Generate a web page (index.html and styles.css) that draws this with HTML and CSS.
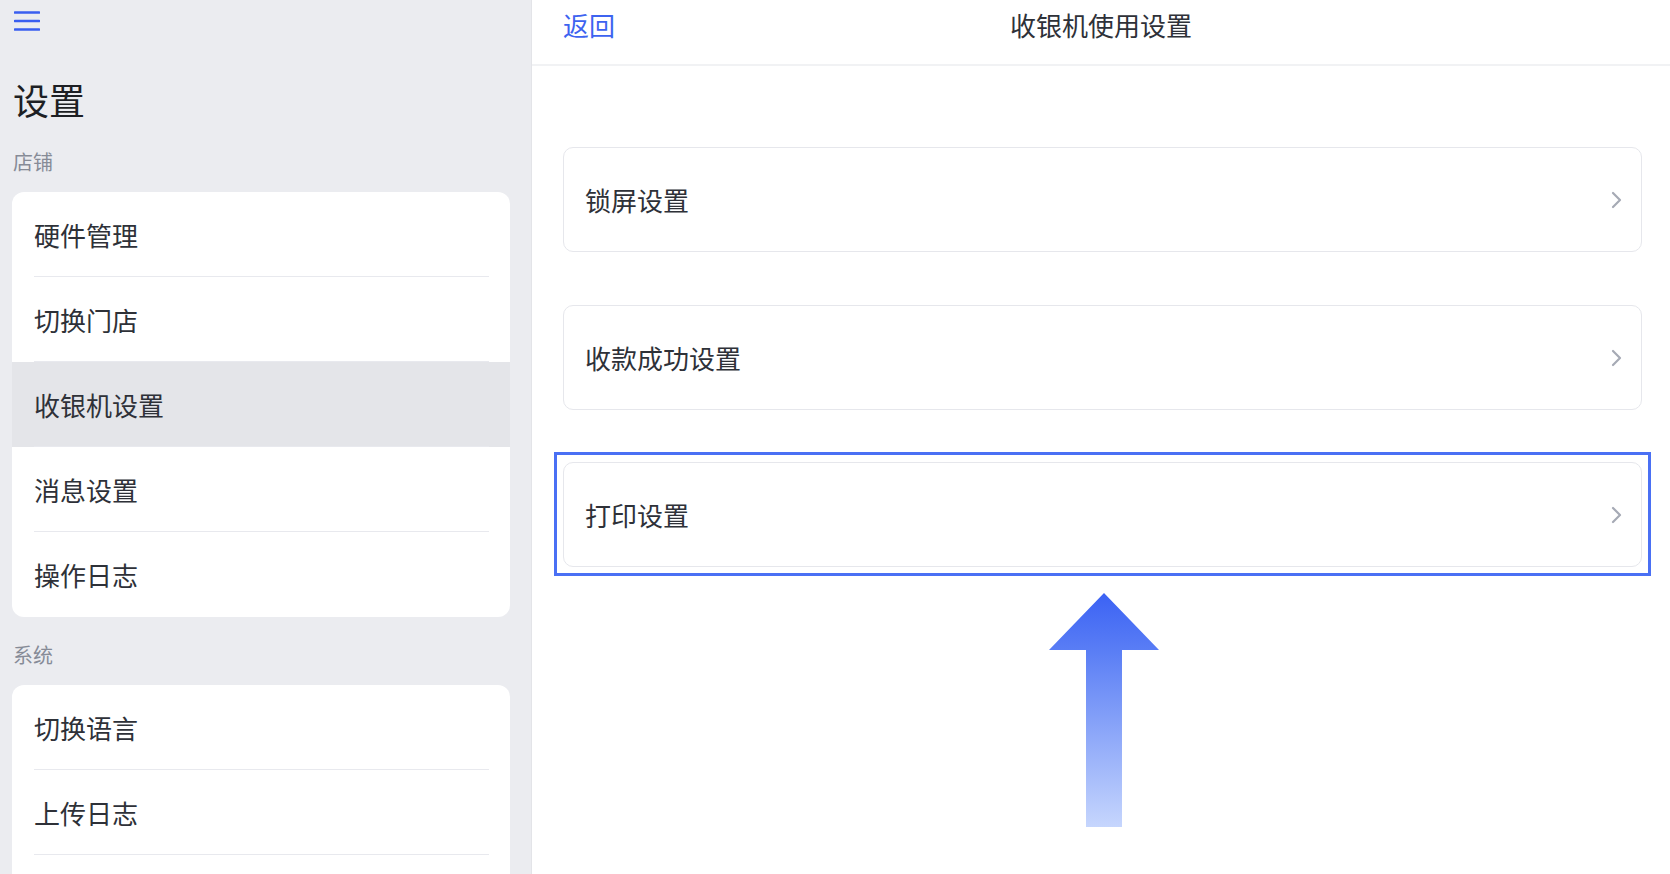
FILE: index.html
```html
<!DOCTYPE html>
<html lang="zh-CN">
<head>
<meta charset="utf-8">
<title>收银机使用设置</title>
<link rel="stylesheet" href="styles.css">
</head>
<body>
<div class="app">
  <aside class="sidebar">
    <div class="topbar">
      <svg class="menu-icon" width="26" height="22" viewBox="0 0 26 22">
        <path d="M1 2.5h24M1 11h24M1 19.5h24" stroke="#3a5ef0" stroke-width="2.6" stroke-linecap="round" fill="none"/>
      </svg>
    </div>
    <h1 class="side-title">设置</h1>
    <div class="section-label">店铺</div>
    <div class="group">
      <div class="row">硬件管理</div>
      <div class="row">切换门店</div>
      <div class="row selected">收银机设置</div>
      <div class="row">消息设置</div>
      <div class="row last">操作日志</div>
    </div>
    <div class="section-label sys">系统</div>
    <div class="group">
      <div class="row">切换语言</div>
      <div class="row">上传日志</div>
      <div class="row"></div>
    </div>
  </aside>
  <main class="panel">
    <header class="panel-header">
      <span class="back">返回</span>
      <span class="panel-title">收银机使用设置</span>
      <span class="spacer"></span>
    </header>
    <div class="panel-body">
      <div class="item">
        <span>锁屏设置</span>
        <svg class="chev" width="11" height="20" viewBox="0 0 11 20"><path d="M2 3l7 7-7 7" stroke="#a6aab5" stroke-width="2.2" fill="none" stroke-linecap="round" stroke-linejoin="round"/></svg>
      </div>
      <div class="item">
        <span>收款成功设置</span>
        <svg class="chev" width="11" height="20" viewBox="0 0 11 20"><path d="M2 3l7 7-7 7" stroke="#a6aab5" stroke-width="2.2" fill="none" stroke-linecap="round" stroke-linejoin="round"/></svg>
      </div>
      <div class="highlight">
        <div class="item">
          <span>打印设置</span>
          <svg class="chev" width="11" height="20" viewBox="0 0 11 20"><path d="M2 3l7 7-7 7" stroke="#a6aab5" stroke-width="2.2" fill="none" stroke-linecap="round" stroke-linejoin="round"/></svg>
        </div>
      </div>
      <div class="arrow-wrap">
        <svg width="110" height="234" viewBox="0 0 110 234">
          <defs>
            <linearGradient id="ag" x1="0" y1="0" x2="0" y2="1">
              <stop offset="0" stop-color="#3b62f4"/>
              <stop offset="0.25" stop-color="#5a7ef5"/>
              <stop offset="1" stop-color="#c6d6fd"/>
            </linearGradient>
          </defs>
          <path d="M55 0L110 57H73V234H37V57H0Z" fill="url(#ag)"/>
        </svg>
      </div>
    </div>
  </main>
</div>
</body>
</html>
```
FILE: styles.css
```css
* { box-sizing: border-box; }
html, body {
  margin: 0;
  padding: 0;
  height: 100%;
  overflow: hidden;
}
body {
  font-family: "Noto Sans CJK SC", "Noto Sans", sans-serif;
  color: #2e3138;
  background: #ffffff;
}
.app {
  display: flex;
  height: 874px;
}
.sidebar {
  width: 532px;
  flex: none;
  background: #ebecf0;
  padding: 0 21px 0 12px;
  border-right: 1px solid #e3e4e8;
}
.topbar {
  height: 44px;
  padding: 10px 0 0 2px;
}
.menu-icon { display: block; }
.side-title {
  margin: 30px 0 0 1px;
  font-size: 36px;
  font-weight: 400;
  line-height: 50px;
  color: #1d1f24;
}
.section-label {
  margin-top: 24px;
  font-size: 20px;
  line-height: 28px;
  color: #868b97;
  padding-left: 1px;
}
.section-label.sys {
  margin-top: 24px;
}
.group {
  margin-top: 16px;
  background: #ffffff;
  border-radius: 12px;
  overflow: hidden;
}
.row {
  position: relative;
  height: 85px;
  display: flex;
  align-items: center;
  padding-left: 22px;
  font-size: 26px;
  color: #2e3138;
}
.row::after {
  content: "";
  position: absolute;
  left: 22px;
  right: 21px;
  bottom: 0;
  height: 1.5px;
  background: #e8e9ee;
}
.row.last::after { display: none; }
.row.selected { background: #e4e5e9; }
.panel {
  flex: 1;
  display: flex;
  flex-direction: column;
  min-width: 0;
}
.panel-header {
  height: 66px;
  flex: none;
  border-bottom: 2px solid #f1f2f4;
  display: grid;
  grid-template-columns: 1fr auto 1fr;
  align-items: center;
  padding: 0 31px 16px 31px;
}
.back {
  font-size: 26px;
  color: #3d63f0;
}
.panel-title {
  font-size: 26px;
  color: #2e3138;
}
.panel-body {
  padding: 81px 28px 0 31px;
  display: flex;
  flex-direction: column;
}
.item {
  height: 105px;
  border: 1.5px solid #e6e7ec;
  border-radius: 10px;
  display: flex;
  align-items: center;
  justify-content: space-between;
  padding: 0 19px 0 21px;
  font-size: 26px;
  color: #2e3138;
  margin-bottom: 53px;
}
.chev { display: block; }
.highlight {
  margin: -11px -9px 0 -9px;
  border: 3px solid #4a70f4;
  padding: 7px 6px 6px 6px;
}
.highlight .item { margin-bottom: 0; }
.arrow-wrap {
  display: flex;
  justify-content: center;
  margin-top: 17px;
  padding-left: 2px;
}
.arrow-wrap svg { display: block; }
```
